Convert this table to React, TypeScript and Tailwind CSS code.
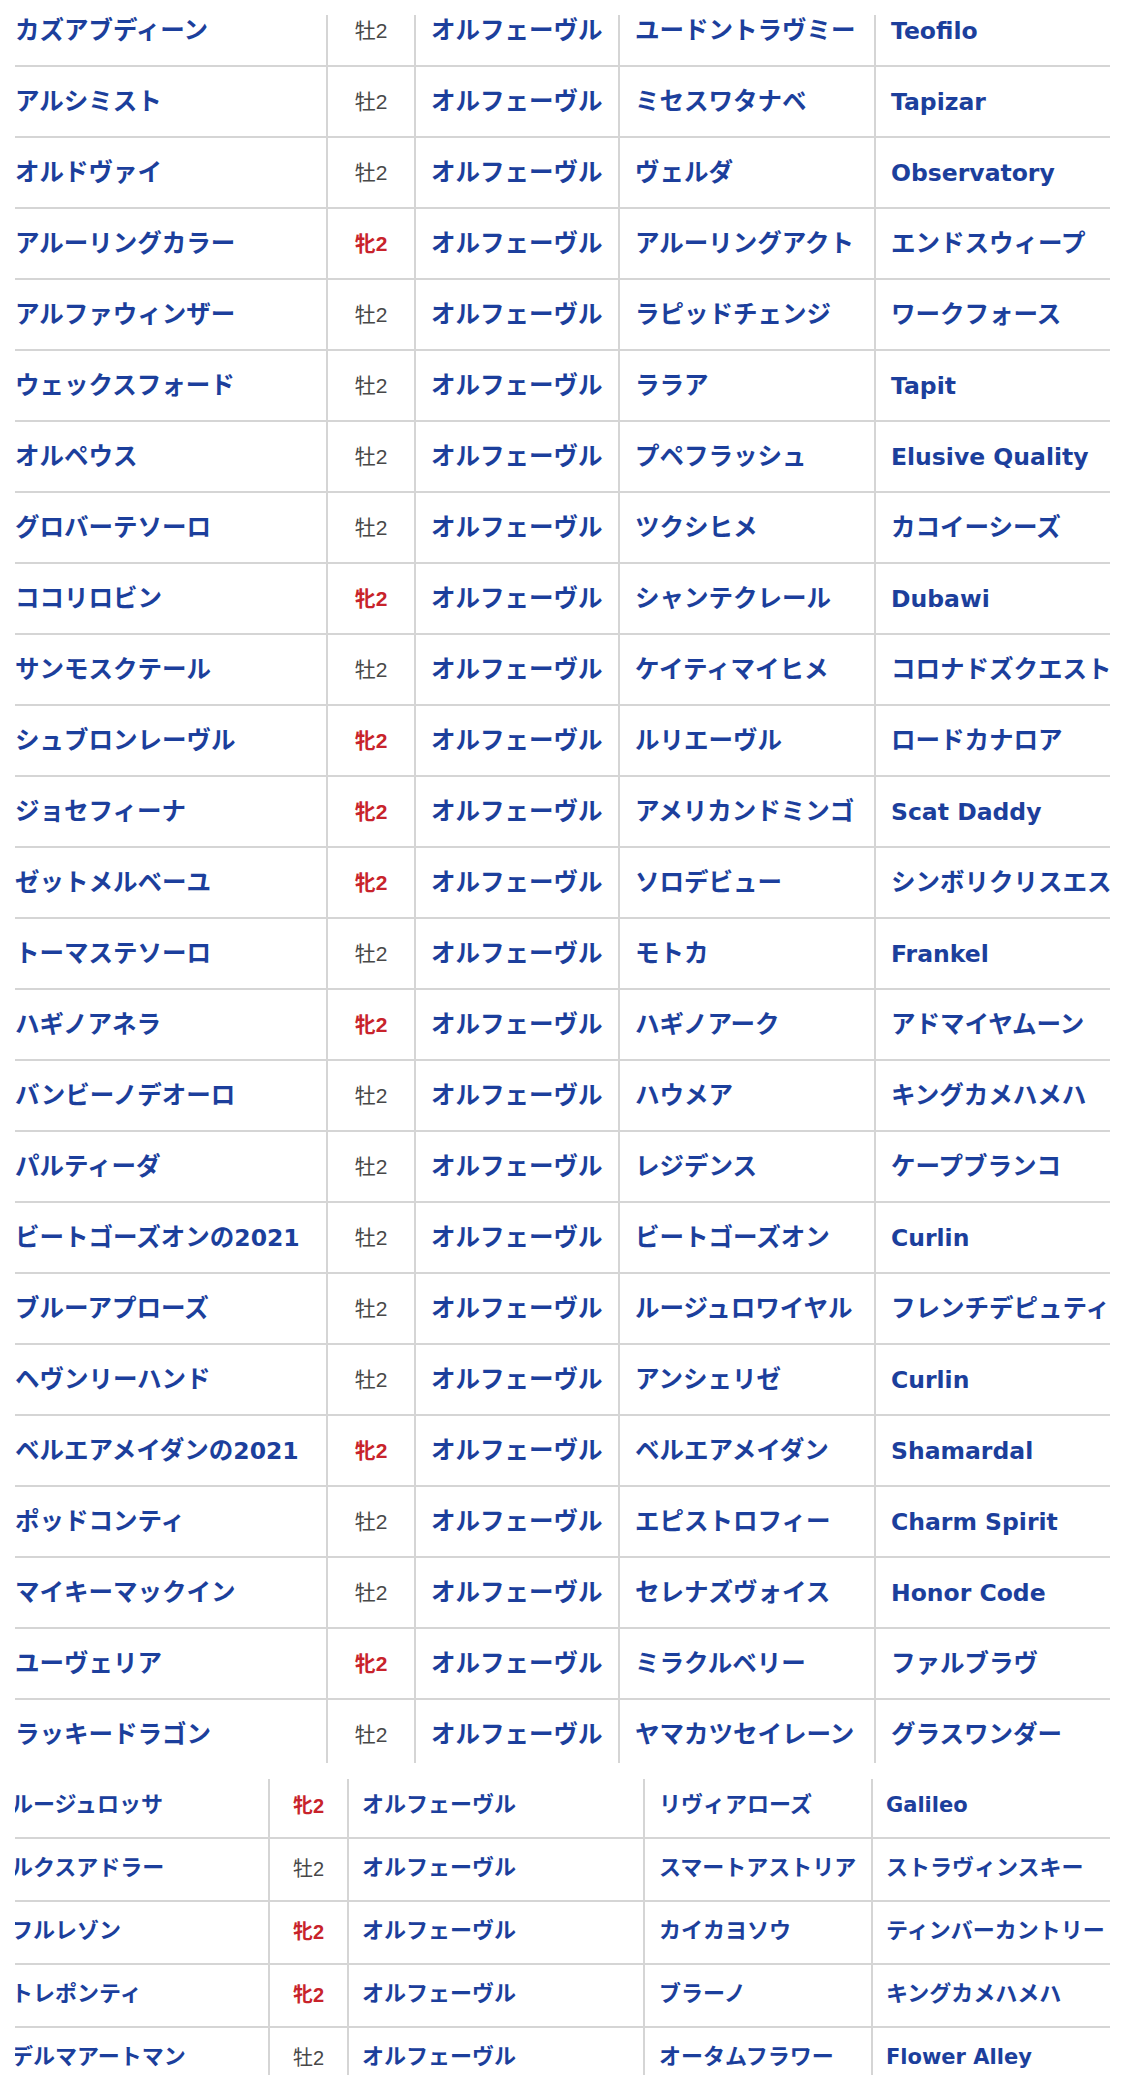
type Horse = {
  name: string
  sex: "牡" | "牝"
  dam: string
  bms: string
}

const SIRE = "オルフェーヴル"

const listA: Horse[] = [
  { name: "カズアブディーン", sex: "牡", dam: "ユードントラヴミー", bms: "Teofilo" },
  { name: "アルシミスト", sex: "牡", dam: "ミセスワタナベ", bms: "Tapizar" },
  { name: "オルドヴァイ", sex: "牡", dam: "ヴェルダ", bms: "Observatory" },
  { name: "アルーリングカラー", sex: "牝", dam: "アルーリングアクト", bms: "エンドスウィープ" },
  { name: "アルファウィンザー", sex: "牡", dam: "ラピッドチェンジ", bms: "ワークフォース" },
  { name: "ウェックスフォード", sex: "牡", dam: "ララア", bms: "Tapit" },
  { name: "オルペウス", sex: "牡", dam: "プペフラッシュ", bms: "Elusive Quality" },
  { name: "グロバーテソーロ", sex: "牡", dam: "ツクシヒメ", bms: "カコイーシーズ" },
  { name: "ココリロビン", sex: "牝", dam: "シャンテクレール", bms: "Dubawi" },
  { name: "サンモスクテール", sex: "牡", dam: "ケイティマイヒメ", bms: "コロナドズクエスト" },
  { name: "シュブロンレーヴル", sex: "牝", dam: "ルリエーヴル", bms: "ロードカナロア" },
  { name: "ジョセフィーナ", sex: "牝", dam: "アメリカンドミンゴ", bms: "Scat Daddy" },
  { name: "ゼットメルベーユ", sex: "牝", dam: "ソロデビュー", bms: "シンボリクリスエス" },
  { name: "トーマステソーロ", sex: "牡", dam: "モトカ", bms: "Frankel" },
  { name: "ハギノアネラ", sex: "牝", dam: "ハギノアーク", bms: "アドマイヤムーン" },
  { name: "バンビーノデオーロ", sex: "牡", dam: "ハウメア", bms: "キングカメハメハ" },
  { name: "パルティーダ", sex: "牡", dam: "レジデンス", bms: "ケープブランコ" },
  { name: "ビートゴーズオンの2021", sex: "牡", dam: "ビートゴーズオン", bms: "Curlin" },
  { name: "ブルーアプローズ", sex: "牡", dam: "ルージュロワイヤル", bms: "フレンチデピュティ" },
  { name: "ヘヴンリーハンド", sex: "牡", dam: "アンシェリゼ", bms: "Curlin" },
  { name: "ベルエアメイダンの2021", sex: "牝", dam: "ベルエアメイダン", bms: "Shamardal" },
  { name: "ポッドコンティ", sex: "牡", dam: "エピストロフィー", bms: "Charm Spirit" },
  { name: "マイキーマックイン", sex: "牡", dam: "セレナズヴォイス", bms: "Honor Code" },
  { name: "ユーヴェリア", sex: "牝", dam: "ミラクルベリー", bms: "ファルブラヴ" },
  { name: "ラッキードラゴン", sex: "牡", dam: "ヤマカツセイレーン", bms: "グラスワンダー" },
]

const listB: Horse[] = [
  { name: "ルージュロッサ", sex: "牝", dam: "リヴィアローズ", bms: "Galileo" },
  { name: "ルクスアドラー", sex: "牡", dam: "スマートアストリア", bms: "ストラヴィンスキー" },
  { name: "フルレゾン", sex: "牝", dam: "カイカヨソウ", bms: "ティンバーカントリー" },
  { name: "トレポンティ", sex: "牝", dam: "ブラーノ", bms: "キングカメハメハ" },
  { name: "デルマアートマン", sex: "牡", dam: "オータムフラワー", bms: "Flower Alley" },
]

// latin runs are set in a wider face, like the phone's font
function Name({ text, small }: { text: string; small?: boolean }) {
  const parts = text.split(/([A-Za-z0-9 ]+)/).filter((p) => p !== "")
  return (
    <span className="whitespace-nowrap">
      {parts.map((p, i) =>
        /^[A-Za-z0-9 ]+$/.test(p) ? (
          <span
            key={i}
            className={`font-['DejaVu_Sans',sans-serif] ${small ? "text-[21px]" : "text-[23.5px]"}`}
          >
            {p}
          </span>
        ) : (
          <span key={i}>{p}</span>
        )
      )}
    </span>
  )
}

function Sex({ sex, small }: { sex: Horse["sex"]; small?: boolean }) {
  const size = small ? "text-[20px]" : "text-[21px]"
  if (sex === "牝") {
    return <span className={`${size} font-bold text-[#c8232b]`}>牝2</span>
  }
  return <span className={`${size} font-normal text-[#484848]`}>牡2</span>
}

function BigRow({ horse }: { horse: Horse }) {
  return (
    <div className="flex h-[71px] border-t-2 border-[#d5d5d5] first:h-[69px] first:border-t-0">
      <div className="w-[311px] shrink-0 flex items-center">
        <Name text={horse.name} />
      </div>
      <div className="w-[88px] shrink-0 flex items-center justify-center border-l-2 border-[#d5d5d5]">
        <Sex sex={horse.sex} />
      </div>
      <div className="w-[204px] shrink-0 flex items-center pl-[15px] border-l-2 border-[#d5d5d5]">
        <Name text={SIRE} />
      </div>
      <div className="w-[256px] shrink-0 flex items-center pl-[15px] border-l-2 border-[#d5d5d5]">
        <Name text={horse.dam} />
      </div>
      <div className="w-[320px] shrink-0 flex items-center pl-[15px] border-l-2 border-[#d5d5d5]">
        <Name text={horse.bms} />
      </div>
    </div>
  )
}

function SmallRow({ horse }: { horse: Horse }) {
  return (
    <div className="flex h-[63px] border-t-2 border-[#d5d5d5] first:h-[61px] first:border-t-0">
      <div className="w-[257px] shrink-0 flex items-center pb-[2px]">
        <Name text={horse.name} small />
      </div>
      <div className="w-[79px] shrink-0 flex items-center justify-center pb-[2px] border-l-2 border-[#d5d5d5]">
        <Sex sex={horse.sex} small />
      </div>
      <div className="w-[296px] shrink-0 flex items-center pb-[2px] pl-[13px] border-l-2 border-[#d5d5d5]">
        <Name text={SIRE} small />
      </div>
      <div className="w-[228px] shrink-0 flex items-center pb-[2px] pl-[14px] border-l-2 border-[#d5d5d5]">
        <Name text={horse.dam} small />
      </div>
      <div className="w-[320px] shrink-0 flex items-center pb-[2px] pl-[13px] border-l-2 border-[#d5d5d5]">
        <Name text={horse.bms} small />
      </div>
    </div>
  )
}

export default function App() {
  return (
    <div className="w-[1125px] h-[2091px] bg-white pt-[15px] font-['Liberation_Sans','Noto_Sans_CJK_JP',sans-serif] font-bold text-[#1c3f9c]">
      {/* first screenshot */}
      <div className="ml-[15px] w-[1095px] h-[1748px] overflow-hidden">
        <div className="-mt-[19px] text-[24.5px] leading-[1.2]">
          {listA.map((h) => (
            <BigRow key={h.name} horse={h} />
          ))}
        </div>
      </div>

      {/* second screenshot, narrower columns */}
      <div className="mt-[16px] ml-[15px] w-[1095px] h-[296px] overflow-hidden">
        <div className="-mt-[3px] -ml-[4px] text-[22px] leading-[1.2]">
          {listB.map((h) => (
            <SmallRow key={h.name} horse={h} />
          ))}
        </div>
      </div>
    </div>
  )
}
